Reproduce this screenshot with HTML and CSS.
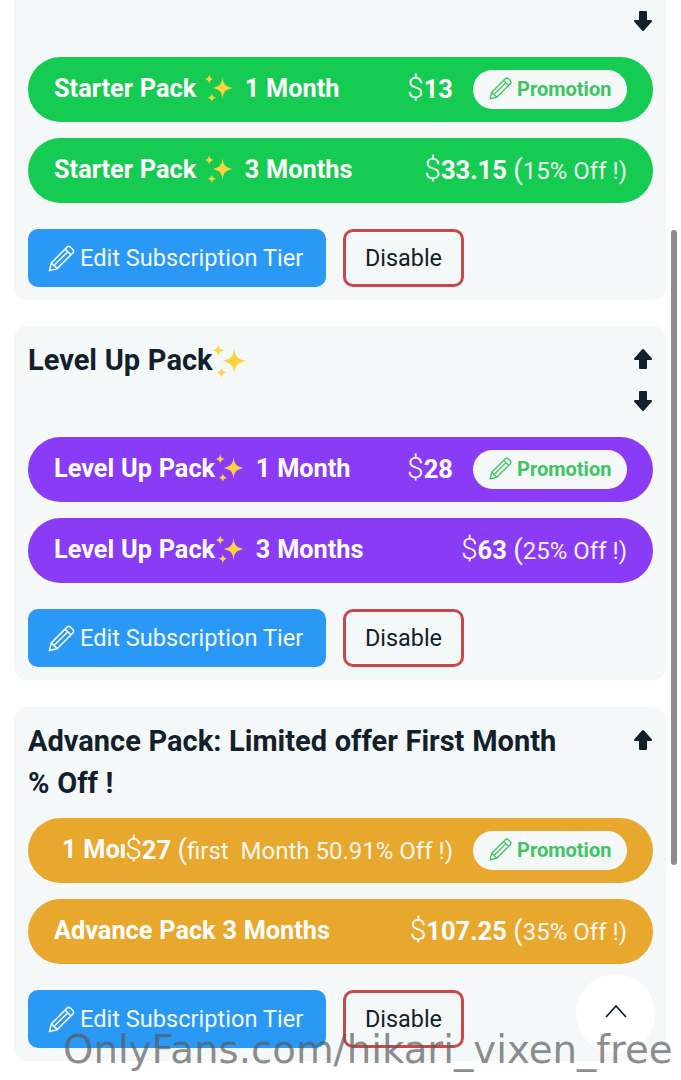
FILE: index.html
```html
<!DOCTYPE html>
<html lang="en">
<head>
<meta charset="utf-8">
<title>Subscription Tiers</title>
<link rel="stylesheet" href="styles.css">
</head>
<body>
<svg class="defs" width="0" height="0" aria-hidden="true">
  <defs>
    <symbol id="pencil" viewBox="0 0 24 24">
      <path d="M2 22 L3.600 15.600 L16.600 2.600 Q18 1.300 19.400 2.600 L21.400 4.600 Q22.700 6 21.400 7.400 L8.400 20.400 Z M15 4.200 L19.800 9 M3.600 15.600 L8.400 20.400 M6.800 16.800 L17 6.600" fill="none" stroke="currentColor" stroke-width="1.300" stroke-linejoin="round" stroke-linecap="round"/>
    </symbol>
    <symbol id="sparkles" viewBox="0 0 36 36">
      <path fill="#fcd33f" d="M22 6 C23 14 25 16 33 18 C25 20 23 22 22 30 C21 22 19 20 11 18 C19 16 21 14 22 6 Z"/>
      <path fill="#fcd33f" d="M7 2 C7.500 6 8.500 7 12 8 C8.500 9 7.500 10 7 14 C6.500 10 5.500 9 2 8 C5.500 7 6.500 6 7 2 Z"/>
      <path fill="#fcd33f" d="M10 24 C10.500 27 11.500 28 14.500 29 C11.500 30 10.500 31 10 34 C9.500 31 8.500 30 5.500 29 C8.500 28 9.500 27 10 24 Z"/>
    </symbol>
    <symbol id="arrow-up" viewBox="0 0 20 22">
      <path d="M10 2 L18 11 L13 11 L13 20 L7 20 L7 11 L2 11 Z" fill="currentColor" stroke="currentColor" stroke-width="2" stroke-linejoin="round"/>
    </symbol>
    <symbol id="arrow-down" viewBox="0 0 20 22">
      <path d="M10 20 L18 11 L13 11 L13 2 L7 2 L7 11 L2 11 Z" fill="currentColor" stroke="currentColor" stroke-width="2" stroke-linejoin="round"/>
    </symbol>
  </defs>
</svg>

<main class="page">
  <section class="card card-first">
    <div class="head head-first">
      <div class="arrows">
        <svg class="arrow"><use href="#arrow-down"/></svg>
      </div>
    </div>
    <div class="tier tier-green">
      <span class="tier-name">Starter Pack <svg class="spark spark-gap"><use href="#sparkles"/></svg> 1 Month</span>
      <span class="tier-price"><span class="dollar">$</span><b>13</b></span>
      <span class="promo"><svg class="promo-icon"><use href="#pencil"/></svg>Promotion</span>
    </div>
    <div class="tier tier-green">
      <span class="tier-name">Starter Pack <svg class="spark spark-gap"><use href="#sparkles"/></svg> 3 Months</span>
      <span class="tier-price"><span class="dollar">$</span><b>33.15</b> <span class="off"><span class="paren">(</span>15% Off !)</span></span>
    </div>
    <div class="actions">
      <span class="btn-edit"><svg class="edit-icon"><use href="#pencil"/></svg>Edit Subscription Tier</span>
      <span class="btn-disable">Disable</span>
    </div>
  </section>

  <section class="card">
    <div class="head">
      <h2 class="title">Level Up Pack<svg class="spark spark-title"><use href="#sparkles"/></svg></h2>
      <div class="arrows">
        <svg class="arrow"><use href="#arrow-up"/></svg>
        <svg class="arrow"><use href="#arrow-down"/></svg>
      </div>
    </div>
    <div class="tier tier-purple">
      <span class="tier-name">Level Up Pack<svg class="spark"><use href="#sparkles"/></svg> 1 Month</span>
      <span class="tier-price"><span class="dollar">$</span><b>28</b></span>
      <span class="promo"><svg class="promo-icon"><use href="#pencil"/></svg>Promotion</span>
    </div>
    <div class="tier tier-purple">
      <span class="tier-name">Level Up Pack<svg class="spark"><use href="#sparkles"/></svg> 3 Months</span>
      <span class="tier-price"><span class="dollar">$</span><b>63</b> <span class="off"><span class="paren">(</span>25% Off !)</span></span>
    </div>
    <div class="actions">
      <span class="btn-edit"><svg class="edit-icon"><use href="#pencil"/></svg>Edit Subscription Tier</span>
      <span class="btn-disable">Disable</span>
    </div>
  </section>

  <section class="card card-last">
    <div class="head">
      <h2 class="title">Advance Pack: Limited offer First Month<br>% Off !</h2>
      <div class="arrows">
        <svg class="arrow"><use href="#arrow-up"/></svg>
      </div>
    </div>
    <div class="tier tier-orange">
      <span class="tier-name tier-name-clipped">1 Month</span>
      <span class="tier-price"><span class="dollar">$</span><b>27</b> <span class="off"><span class="paren">(</span>first&nbsp; Month 50.91% Off !)</span></span>
      <span class="promo"><svg class="promo-icon"><use href="#pencil"/></svg>Promotion</span>
    </div>
    <div class="tier tier-orange">
      <span class="tier-name">Advance Pack 3 Months</span>
      <span class="tier-price"><span class="dollar">$</span><b>107.25</b> <span class="off"><span class="paren">(</span>35% Off !)</span></span>
    </div>
    <div class="actions">
      <span class="btn-edit"><svg class="edit-icon"><use href="#pencil"/></svg>Edit Subscription Tier</span>
      <span class="btn-disable">Disable</span>
    </div>
  </section>
</main>

<div class="scrollbar"></div>
<div class="to-top">
  <svg class="chevron" viewBox="0 0 24 14"><path d="M2 13 L12 2 L22 13" fill="none" stroke="currentColor" stroke-width="1.8"/></svg>
</div>
<div class="watermark">OnlyFans.com/hikari_vixen_free</div>
</body>
</html>
```

FILE: styles.css
```css
* { box-sizing: border-box; }

html, body {
  margin: 0;
  height: 1080px;
  overflow: hidden;
  background: #ffffff;
}

body {
  position: relative;
  font-family: Roboto, "Liberation Sans", sans-serif;
  color: #12202b;
}

.defs { position: absolute; }

.page {
  display: flex;
  flex-direction: column;
  gap: 26px;
  padding: 0 15px 0 14px;
}

.card {
  background: #f5f8f9;
  border-radius: 13px;
  padding: 13px 13px 13px 14px;
  display: flex;
  flex-direction: column;
}

.card-first {
  border-radius: 0 0 13px 13px;
  padding-top: 0;
}

.card-last { margin-top: 1px; }

.head {
  display: flex;
  justify-content: space-between;
  align-items: flex-start;
  margin-bottom: 14px;
}

.head-first {
  justify-content: flex-end;
  height: 43px;
  padding-top: 10px;
}

.title {
  margin: 0;
  font-size: 29px;
  font-weight: 700;
  line-height: 42px;
  word-spacing: 0.500px;
  white-space: nowrap;
}

.arrows {
  display: flex;
  flex-direction: column;
  gap: 20px;
  padding: 9px 0 11px;
}

.head-first .arrows { padding: 0; }

.arrow {
  display: block;
  width: 20px;
  height: 22px;
  color: #12202b;
}

.tier {
  display: flex;
  align-items: center;
  height: 65px;
  border-radius: 33px;
  padding: 0 26px 3px;
  margin-bottom: 16px;
  color: #ffffff;
  font-size: 25.300px;
  white-space: nowrap;
}

.tier-green { background: #15cb52; }
.tier-purple { background: #8a3bf5; }
.tier-orange { background: #e8a82e; }

.tier-name {
  flex: 1 1 0;
  min-width: 0;
  overflow: hidden;
  font-weight: 700;
  word-spacing: 0.500px;
}

.tier-name-clipped { padding-left: 8px; }

.tier-price { font-weight: 400; margin-bottom: 2px; font-size: 25.500px; }
.tier-price b { font-weight: 700; }

.dollar { font-size: 30px; font-weight: 300; }
.off { font-weight: 400; font-size: 24px; opacity: 0.92; }
.paren { font-size: 28px; }

.spark {
  display: inline-block;
  width: 32px;
  height: 32px;
  margin: 0 3px 0 -1px;
  vertical-align: -7px;
}

.spark-gap { margin: 0 3px 0 0; }
.spark-title { width: 38px; height: 38px; margin: 0 0 0 -2px; vertical-align: -10px; }

.promo {
  display: flex;
  align-items: center;
  gap: 4px;
  height: 39px;
  width: 154px;
  margin-left: 20px;
  margin-top: 3px;
  padding: 0 0 2px 15px;
  border-radius: 20px;
  background: #f5f8f9;
  color: #3fc463;
  font-size: 20px;
  font-weight: 700;
}

.promo-icon { width: 25px; height: 25px; }

.actions {
  display: flex;
  gap: 17px;
  margin-top: 10px;
}

.btn-edit {
  display: flex;
  align-items: center;
  gap: 4px;
  width: 298px;
  height: 58px;
  padding-left: 19px;
  border-radius: 10px;
  background: #2a98f5;
  color: #f2f9ff;
  font-size: 23.600px;
  white-space: nowrap;
}

.edit-icon { width: 29px; height: 29px; }

.btn-disable {
  display: flex;
  align-items: center;
  justify-content: center;
  width: 121px;
  height: 58px;
  border: 3px solid #c9484a;
  border-radius: 10px;
  color: #12202b;
  font-size: 23.400px;
}

.scrollbar {
  position: absolute;
  left: 671px;
  top: 230px;
  width: 6px;
  height: 635px;
  border-radius: 3px;
  background: #8c8c8c;
}

.to-top {
  position: absolute;
  left: 576px;
  top: 974px;
  width: 79px;
  height: 79px;
  border-radius: 50%;
  background: #ffffff;
  display: flex;
  align-items: center;
  justify-content: center;
  color: #12202b;
}

.chevron { width: 24px; height: 14px; margin-bottom: 6px; }

.watermark {
  position: absolute;
  left: 63px;
  top: 1027px;
  font-family: "DejaVu Sans", sans-serif;
  font-size: 38.700px;
  line-height: 46px;
  color: rgba(90, 90, 90, 0.7);
  white-space: nowrap;
}
```
